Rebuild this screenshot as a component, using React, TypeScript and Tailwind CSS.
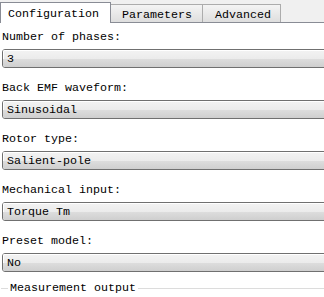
export default function App() {
  const fields = [
    { label: "Number of phases:", value: "3" },
    { label: "Back EMF waveform:", value: "Sinusoidal" },
    { label: "Rotor type:", value: "Salient-pole" },
    { label: "Mechanical input:", value: "Torque Tm" },
    { label: "Preset model:", value: "No" },
  ];

  return (
    <div className="w-[324px] h-[297px] overflow-hidden bg-white text-black font-['Liberation_Mono',monospace] text-[11.67px] leading-[14px]">
      {/* tab strip */}
      <div className="flex items-end h-[23px] bg-[#f0f0f0] border-b border-[#898c95]">
        <div className="h-[21px] w-[111px] -mb-px pl-[7px] pt-[4px] bg-white border-t border-l border-r border-[#898c95]">
          Configuration
        </div>
        <div className="h-[18px] w-[92px] pl-[11px] pt-[3px] border-t border-r border-[#acacac] bg-gradient-to-b from-[#f4f4f4] to-[#dedede]">
          Parameters
        </div>
        <div className="h-[18px] w-[78px] pl-[12px] pt-[3px] border-t border-r border-[#acacac] bg-gradient-to-b from-[#f4f4f4] to-[#dedede]">
          Advanced
        </div>
      </div>

      {/* fields */}
      <div className="pt-[7px] pl-[2px] flex flex-col gap-[13px]">
        {fields.map((f) => (
          <div key={f.label} className="flex flex-col gap-[5px]">
            <div className="h-[14px]">{f.label}</div>
            <div className="w-[340px] h-[19px] rounded-l-[3px] border border-[#707070] overflow-hidden flex flex-col">
              <div className="h-[9px] bg-gradient-to-b from-[#f2f2f2] to-[#ebebeb] border-t border-l border-white pl-[3px] relative">
                <span className="absolute left-[3px] top-[1px]">{f.value}</span>
              </div>
              <div className="flex-1 bg-gradient-to-b from-[#dddddd] to-[#cfcfcf]" />
            </div>
          </div>
        ))}
      </div>

      {/* group box header */}
      <div className="mt-[9px] flex items-center h-[14px]">
        <div className="w-[7px] ml-[1px] h-px bg-[#dcdcdc]" />
        <div className="px-[2px]">Measurement output</div>
        <div className="flex-1 h-px bg-[#dcdcdc]" />
      </div>
    </div>
  );
}
